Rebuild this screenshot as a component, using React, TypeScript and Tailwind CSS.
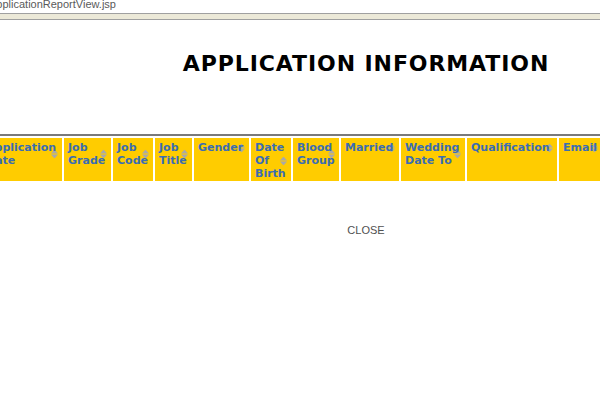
import React from "react";

const cols: { w: number; lines: string[] }[] = [
  { w: 80, lines: ["Application", "Date"] },
  { w: 47, lines: ["Job", "Grade"] },
  { w: 40, lines: ["Job", "Code"] },
  { w: 37, lines: ["Job", "Title"] },
  { w: 55, lines: ["Gender"] },
  { w: 40, lines: ["Date", "Of", "Birth"] },
  { w: 46, lines: ["Blood", "Group"] },
  { w: 58, lines: ["Married"] },
  { w: 64, lines: ["Wedding", "Date To"] },
  { w: 90, lines: ["Qualification"] },
  { w: 43, lines: ["Email"] },
];

function SortArrows() {
  return (
    <svg width="7" height="9" viewBox="0 0 7 9" className="block">
      <polygon points="3.5,0 7,4 0,4" fill="#a9a9a9" />
      <polygon points="0,5 7,5 3.5,9" fill="#a9a9a9" />
    </svg>
  );
}

export default function App() {
  return (
    <div className="w-[600px] h-[400px] overflow-hidden bg-white relative">
      <div className="w-[732px]">
        <div
          className="h-[13px] text-[11px] leading-[9px] text-[#5a5a5a] whitespace-nowrap ml-[-11px]"
          style={{ fontFamily: '"Liberation Sans", Arial, sans-serif' }}
        >
          ApplicationReportView.jsp
        </div>
        <div className="h-[7px] border-t border-b border-[#a0a0a0] bg-[#ece9d8]" />
        <div
          className="mt-[31px] h-[26px] leading-[26px] text-[22px] font-bold tracking-[0.9px] text-black text-center whitespace-nowrap"
          style={{ fontFamily: '"DejaVu Sans", Verdana, sans-serif' }}
        >
          APPLICATION INFORMATION
        </div>
        <div className="mt-[57px] ml-[-18px] border-t-2 border-[#7a7a7a] pt-[2px] w-[700px]">
          <div
            className="flex gap-[2px]"
            style={{ fontFamily: '"DejaVu Sans", Verdana, sans-serif' }}
          >
            {cols.map((c, i) => (
              <div
                key={i}
                className="shrink-0 h-[43px] bg-[#ffcc00] px-[4px] pt-[3px]"
                style={{ width: c.w }}
              >
                <div className="relative">
                  <div className="absolute right-0 top-1/2 -translate-y-1/2">
                    <SortArrows />
                  </div>
                  <div className="relative text-[11px] leading-[13px] font-bold text-[#3b6db3] whitespace-nowrap">
                    {c.lines.map((l, j) => (
                      <div key={j}>{l}</div>
                    ))}
                  </div>
                </div>
              </div>
            ))}
          </div>
        </div>
        <div
          className="mt-[43px] text-center text-[11px] leading-[13px] text-[#505050]"
          style={{ fontFamily: '"Liberation Sans", Arial, sans-serif' }}
        >
          CLOSE
        </div>
      </div>
    </div>
  );
}
